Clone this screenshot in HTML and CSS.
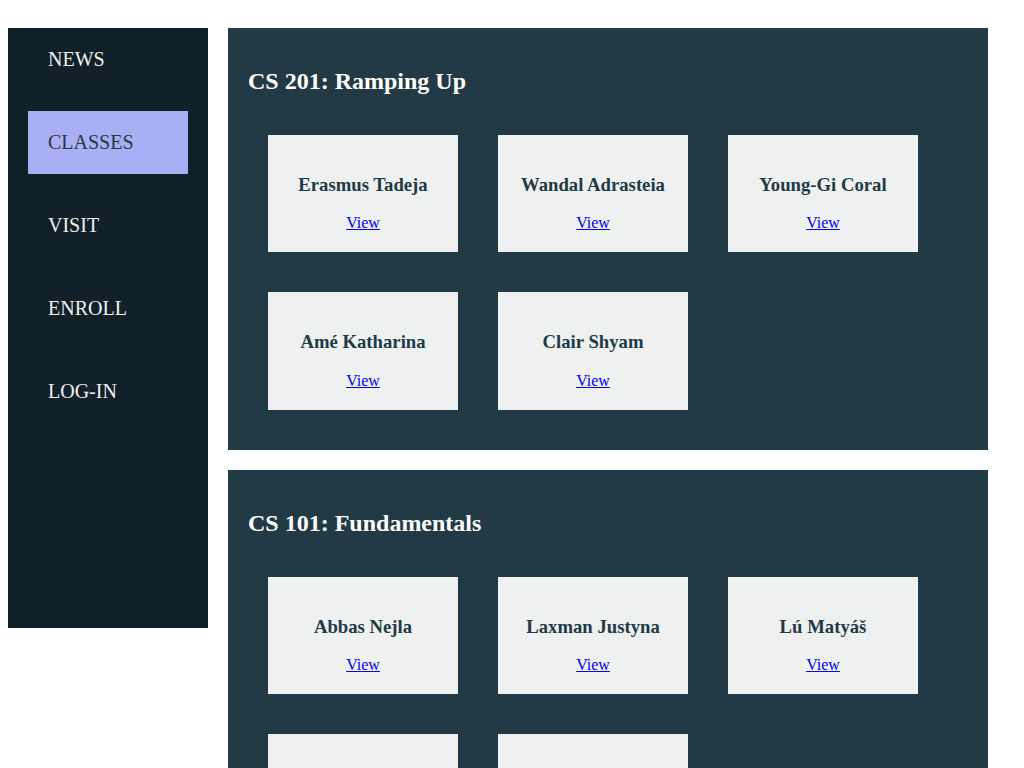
FILE: index.html
```html
<!DOCTYPE html>
<html>
<head>
<meta charset="utf-8">
<link rel="stylesheet" href="styles.css">
</head>
<body>
<div class="layout">
  <nav class="sidebar">
    <a class="nav-item">NEWS</a>
    <a class="nav-item active">CLASSES</a>
    <a class="nav-item">VISIT</a>
    <a class="nav-item">ENROLL</a>
    <a class="nav-item">LOG-IN</a>
  </nav>
  <main class="content">
    <section class="course">
      <h2>CS 201: Ramping Up</h2>
      <div class="cards">
        <div class="card"><h3>Erasmus Tadeja</h3><a href="#">View</a></div>
        <div class="card"><h3>Wandal Adrasteia</h3><a href="#">View</a></div>
        <div class="card"><h3>Young-Gi Coral</h3><a href="#">View</a></div>
        <div class="card"><h3>Amé Katharina</h3><a href="#">View</a></div>
        <div class="card"><h3>Clair Shyam</h3><a href="#">View</a></div>
      </div>
    </section>
    <section class="course">
      <h2>CS 101: Fundamentals</h2>
      <div class="cards">
        <div class="card"><h3>Abbas Nejla</h3><a href="#">View</a></div>
        <div class="card"><h3>Laxman Justyna</h3><a href="#">View</a></div>
        <div class="card"><h3>Lú Matyáš</h3><a href="#">View</a></div>
        <div class="card"><h3>Ifeoma Zoltan</h3><a href="#">View</a></div>
        <div class="card"><h3>Noor Anselm</h3><a href="#">View</a></div>
      </div>
    </section>
  </main>
</div>
</body>
</html>
```
FILE: styles.css
```css
body {
  margin: 8px;
  font-family: "Liberation Serif", "Times New Roman", serif;
}
.layout {
  display: flex;
  align-items: flex-start;
  gap: 20px;
  margin-top: 20px;
}
.sidebar {
  width: 200px;
  height: 600px;
  flex: none;
  background: #112029;
  padding: 0 20px;
  box-sizing: border-box;
  display: flex;
  flex-direction: column;
  gap: 20px;
}
.nav-item {
  display: block;
  padding: 20px;
  font-size: 20px;
  line-height: 23px;
  color: #f0f0f0;
}
.nav-item.active {
  background: #aaaef5;
  color: #223a45;
}
.content {
  width: 760px;
  display: flex;
  flex-direction: column;
  gap: 20px;
}
.course {
  background: #223a45;
  padding: 20px;
}
.course h2 {
  margin: 20px 0;
  font-size: 24px;
  color: #ffffff;
}
.cards {
  display: flex;
  flex-wrap: wrap;
}
.card {
  width: 190px;
  margin: 20px;
  padding: 20px 0;
  background: #eff0f0;
  text-align: center;
  font-size: 16px;
}
.card h3 {
  margin: 18.72px 0;
  font-size: 18.72px;
  color: #223a45;
}
.card a {
  color: #0000ee;
}
```
